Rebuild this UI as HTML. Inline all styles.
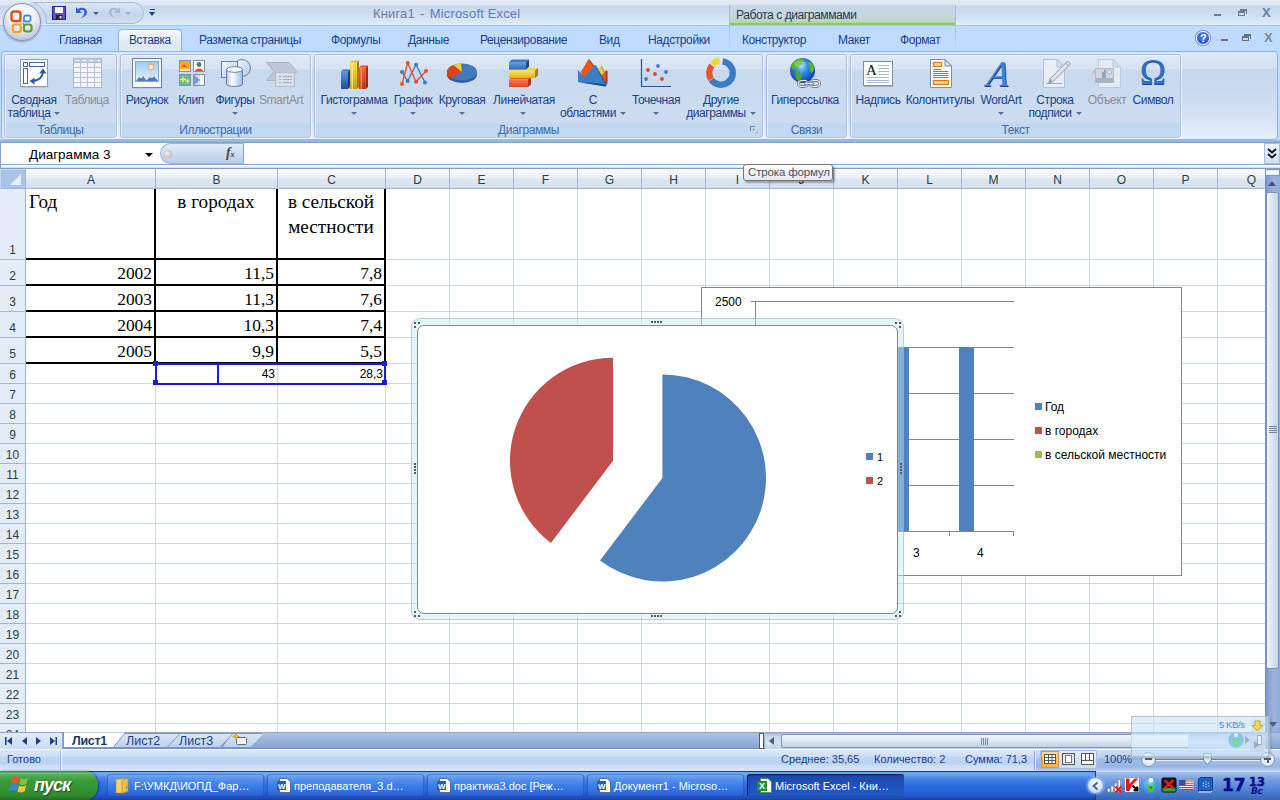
<!DOCTYPE html>
<html lang="ru"><head><meta charset="utf-8"><title>Книга1 - Microsoft Excel</title>
<style>
*{box-sizing:border-box;margin:0;padding:0}
html,body{width:1280px;height:800px;overflow:hidden;background:#fff}
body{font-family:"Liberation Sans",sans-serif;font-size:12px;letter-spacing:-.4px;color:#15428b;position:relative}
.abs,.abs>*{position:absolute}
.a{position:absolute}
.t{position:absolute;white-space:nowrap;line-height:14px}
.c{text-align:center}
#title{left:0;top:0;width:1280px;height:26px;background:linear-gradient(#e2ebf6 0,#dbe6f4 5px,#c8d9ee 6px,#cbdbf0 12px,#d6e4f5 19px,#e1ecf9 25px)}
#tabrow{left:0;top:26px;width:1280px;height:27px;background:#bfdbff}
#ribbon{left:1px;top:51px;width:1277px;height:89px;border:1px solid #8db2e3;border-radius:4px;background:linear-gradient(#dde8f5 0,#d4e1f2 16px,#c8d9ee 17px,#c9daef 40px,#d6e4f5 68px,#e6f1fc 88px)}
.grp{position:absolute;top:54px;height:84px;border:1px solid #a9c2e2;border-radius:3px;background:linear-gradient(#dfe9f5 0,#d6e2f2 14px,#c8d9ee 15px,#cddcf1 67px,#c1d8f0 68px,#c3daf3 100%);box-shadow:1px 1px 0 rgba(255,255,255,.65), inset 1px 1px 0 rgba(255,255,255,.5)}
.glab{position:absolute;left:0;right:0;bottom:0;height:15px;line-height:17px;text-align:center;color:#3e6aaa;font-size:12px}
.rl{position:absolute;white-space:nowrap;text-align:center;line-height:13px;font-size:12px;color:#15428b}
.dis{color:#8d8d8d}
.ia{display:inline-block;vertical-align:middle;margin-left:4px;margin-top:-1px;width:0;height:0;border-left:3px solid transparent;border-right:3px solid transparent;border-top:3px solid #5a6f96}
.arr{position:absolute;width:0;height:0;border-left:3px solid transparent;border-right:3px solid transparent;border-top:3px solid #5a6f96}
.tb{position:absolute;top:774px;height:23px;width:157px;border-radius:3px;background:linear-gradient(#86b8f3 0,#5e9cee 3px,#4585e8 9px,#3572e0 16px,#2c62d4 21px,#2350ba 23px);box-shadow:inset 0 0 0 1px rgba(30,70,180,.55)}
.tbt{position:absolute;top:779px;color:#fff;font-size:11px;letter-spacing:0;line-height:14px;white-space:nowrap}
.hd{position:absolute;width:2px;height:2px;background:#5a5a5a}
</style></head><body>
<!-- TITLE BAR -->
<div class="a" id="title"></div>
<div class="a" style="left:0;top:25px;width:1280px;height:1px;background:#a5c6ee"></div>
<div class="a" id="tabrow"></div>
<!-- contextual tab header -->
<div class="a" style="left:729px;top:5px;width:227px;height:20px;background:linear-gradient(#c6d6e8 0,#c5d8e0 10px,#bcd6bc 17px,#86c349 19px,#a4d17c 20px);border-left:1px solid #a9bfd9;border-right:1px solid #a9bfd9"></div>
<div class="a" style="left:729px;top:26px;width:1px;height:25px;background:linear-gradient(#a9bfd9,#bfdbff)"></div>
<div class="a" style="left:955px;top:26px;width:1px;height:25px;background:linear-gradient(#a9bfd9,#bfdbff)"></div>
<div class="t" style="left:736px;top:8px;font-size:12px;color:#1e395b">Работа с диаграммами</div>
<div class="t" style="left:373px;top:7px;font-size:13px;color:#6f7d9c;letter-spacing:.15px;word-spacing:1.500px">Книга1 - <span style="color:#6678b8;word-spacing:0">Microsoft Excel</span></div>
<!-- quick access toolbar -->
<div class="a" style="left:30px;top:2px;width:114px;height:22px;overflow:hidden;border-radius:0 11px 11px 0"><div class="a" style="left:0;top:0;width:114px;height:22px;border:1px solid #a3bcdc;border-radius:0 11px 11px 0;background:linear-gradient(#dbe6f4,#c4d6ec 60%,#d0dff1)"></div><div class="a" style="left:-31px;top:-3px;width:48px;height:48px;border-radius:50%;background:#cddcf0;border:1px solid #a3bcdc"></div></div>
<!-- office button -->
<div class="a" style="left:3px;top:3px;width:38px;height:38px;border-radius:50%;background:radial-gradient(circle at 50% 28%,#ffffff 0,#f1f3f7 38%,#cdd3de 72%,#a9b2c2 100%);border:1px solid #8d97a9;box-shadow:0 1px 2px rgba(60,80,120,.45)"></div>
<svg class="a" style="left:9px;top:9px" width="26" height="26" viewBox="0 0 26 26">
<rect x="2.500" y="2.500" width="9" height="9.500" rx="2.500" fill="none" stroke="#dd4f14" stroke-width="2.400"/>
<rect x="15" y="6.500" width="6.500" height="6" rx="1.800" fill="none" stroke="#3f8ad6" stroke-width="1.800"/>
<rect x="3.800" y="15.500" width="8" height="7.500" rx="2.200" fill="none" stroke="#f3a31a" stroke-width="2.200"/>
<rect x="15" y="15.500" width="7.500" height="7" rx="2.200" fill="none" stroke="#58a02a" stroke-width="2.200"/>
<circle cx="11.800" cy="12.200" r="1" fill="#e8681c"/><circle cx="14.600" cy="12.200" r="1" fill="#3f8ad6"/><circle cx="11.800" cy="15" r="1" fill="#f3a31a"/><circle cx="14.600" cy="15" r="1" fill="#58a02a"/>
</svg>
<!-- save icon -->
<svg class="a" style="left:52px;top:6px" width="14" height="14" viewBox="0 0 14 14"><rect x="0.5" y="0.5" width="13" height="13" fill="#5a4fc0" stroke="#2a2480"/><rect x="3" y="1" width="8" height="6" fill="#f4f4fb"/><rect x="4" y="9" width="6" height="4" fill="#222"/><rect x="7.5" y="10" width="2" height="2.5" fill="#ddd"/></svg>
<!-- undo -->
<svg class="a" style="left:74px;top:6px" width="16" height="14" viewBox="0 0 16 14"><path d="M2 1 L2 7 L8 7 L5.8 5 C8 2.6 11 4 10.4 7.2 C10 9.4 8.4 10.8 6.8 11.8 C10.6 11.4 13.2 9 13 5.8 C12.6 1.6 7.4 0.4 4 3.2 Z" fill="#2f62c4"/></svg>
<div class="arr" style="left:93px;top:12px;border-top-color:#3c5f9c"></div>
<!-- redo disabled -->
<svg class="a" style="left:106px;top:6px" width="16" height="14" viewBox="0 0 16 14"><path d="M14 1 L14 7 L8 7 L10.2 5 C8 2.6 5 4 5.6 7.2 C6 9.4 7.6 10.8 9.2 11.8 C5.4 11.4 2.8 9 3 5.8 C3.4 1.6 8.6 0.4 12 3.2 Z" fill="#a9b9d2"/></svg>
<div class="arr" style="left:125px;top:12px;border-top-color:#a6b0c2"></div>
<!-- qat customize -->
<div class="a" style="left:150px;top:9px;width:5px;height:1px;background:#1e3c7a"></div>
<div class="arr" style="left:149px;top:12px;border-top-color:#1e3c7a;border-left-width:3.5px;border-right-width:3.5px;border-top-width:4px"></div>
<!-- window controls -->
<div class="a" style="left:1214px;top:14px;width:7px;height:2px;background:#6b7a8f"></div>
<div class="a" style="left:1238px;top:11px;width:7px;height:5px;border:1px solid #6b7a8f;border-top-width:2px"></div>
<div class="a" style="left:1240px;top:9px;width:7px;height:5px;border:1px solid #6b7a8f;border-top-width:2px;border-left:none;border-bottom:none"></div>
<div class="t" style="left:1262px;top:6px;font-size:13px;font-weight:bold;color:#6b7fa0">X</div>
<div class="a" style="left:1221px;top:39px;width:7px;height:2px;background:#6b6f78"></div>
<div class="a" style="left:1242px;top:36px;width:7px;height:5px;border:1px solid #6b6f78;border-top-width:2px"></div>
<div class="a" style="left:1244px;top:34px;width:7px;height:5px;border:1px solid #6b6f78;border-top-width:2px;border-left:none;border-bottom:none"></div>
<div class="t" style="left:1264px;top:31px;font-size:13px;font-weight:bold;color:#84878d">X</div>
<div class="a" style="left:1196px;top:31px;width:14px;height:14px;border-radius:50%;background:radial-gradient(circle at 50% 35%,#5f8df0,#1235b8);border:1px solid #fff;box-shadow:0 0 0 1px #6d8fd0"></div>
<div class="t" style="left:1200px;top:31px;font-size:11px;font-weight:bold;color:#fff">?</div>
<div class="a" style="left:0;top:50px;width:1280px;height:91px;background:#bfdbff"></div>
<!-- TABS -->
<div class="a" style="left:118px;top:29px;width:64px;height:24px;border:1px solid #8db2e3;border-bottom:none;border-radius:4px 4px 0 0;background:linear-gradient(#f6f9fd,#e1eaf6 60%,#dde8f5)"></div>
<div class="t" style="left:59px;top:33px">Главная</div>
<div class="t" style="left:129px;top:33px">Вставка</div>
<div class="t" style="left:199px;top:33px">Разметка страницы</div>
<div class="t" style="left:331px;top:33px">Формулы</div>
<div class="t" style="left:408px;top:33px">Данные</div>
<div class="t" style="left:480px;top:33px">Рецензирование</div>
<div class="t" style="left:599px;top:33px">Вид</div>
<div class="t" style="left:648px;top:33px">Надстройки</div>
<div class="t" style="left:742px;top:33px">Конструктор</div>
<div class="t" style="left:838px;top:33px">Макет</div>
<div class="t" style="left:900px;top:33px">Формат</div>
<!-- RIBBON -->
<div class="a" id="ribbon"></div>
<div class="grp" style="left:4px;width:113px"><div class="glab">Таблицы</div></div>
<div class="grp" style="left:120px;width:191px"><div class="glab">Иллюстрации</div></div>
<div class="grp" style="left:314px;width:449px"><div class="glab" style="right:20px">Диаграммы</div></div>
<div class="grp" style="left:766px;width:81px"><div class="glab">Связи</div></div>
<div class="grp" style="left:850px;width:331px"><div class="glab">Текст</div></div>
<!-- dialog launcher -->
<svg class="a" style="left:750px;top:126px" width="8" height="8" viewBox="0 0 8 8"><path d="M0.5 5 V0.5 H5" fill="none" stroke="#6d83a8"/><path d="M3 3 L7 7 M7 4 V7 H4" fill="none" stroke="#6d83a8" stroke-width="1.2"/><rect x="4" y="4" width="3.5" height="3.5" fill="#fff" opacity=".6"/></svg>
<!-- ribbon labels -->
<div class="rl" style="left:-6px;top:94px;width:80px">Сводная<br>таблица<i class="ia"></i></div>
<div class="rl dis" style="left:47px;top:94px;width:80px">Таблица</div>
<div class="rl" style="left:107px;top:94px;width:80px">Рисунок</div>
<div class="rl" style="left:151px;top:94px;width:80px">Клип</div>
<div class="rl" style="left:195px;top:94px;width:80px">Фигуры</div><div class="arr" style="left:232px;top:112px"></div>
<div class="rl dis" style="left:241px;top:94px;width:80px">SmartArt</div>
<div class="rl" style="left:314px;top:94px;width:80px">Гистограмма</div><div class="arr" style="left:351px;top:112px"></div>
<div class="rl" style="left:373px;top:94px;width:80px">График</div><div class="arr" style="left:410px;top:112px"></div>
<div class="rl" style="left:422px;top:94px;width:80px">Круговая</div><div class="arr" style="left:459px;top:112px"></div>
<div class="rl" style="left:484px;top:94px;width:80px">Линейчатая</div><div class="arr" style="left:520px;top:112px"></div>
<div class="rl" style="left:553px;top:94px;width:80px">С<br>областями<i class="ia"></i></div>
<div class="rl" style="left:616px;top:94px;width:80px">Точечная</div><div class="arr" style="left:653px;top:112px"></div>
<div class="rl" style="left:681px;top:94px;width:80px">Другие<br>диаграммы<i class="ia"></i></div>
<div class="rl" style="left:765px;top:94px;width:80px">Гиперссылка</div>
<div class="rl" style="left:838px;top:94px;width:80px">Надпись</div>
<div class="rl" style="left:900px;top:94px;width:80px">Колонтитулы</div>
<div class="rl" style="left:961px;top:94px;width:80px">WordArt</div><div class="arr" style="left:998px;top:112px"></div>
<div class="rl" style="left:1015px;top:94px;width:80px">Строка<br>подписи<i class="ia"></i></div>
<div class="rl dis" style="left:1067px;top:94px;width:80px">Объект</div>
<div class="rl" style="left:1113px;top:94px;width:80px">Символ</div>
<!-- ICONS group 1,2 -->
<svg class="a" style="left:18px;top:57px" width="32" height="32" viewBox="0 0 32 32">
<rect x="2.5" y="2.5" width="27" height="27" fill="#fdfeff" stroke="#8fa0bf"/><rect x="3" y="29.5" width="27.5" height="1" fill="#8d9bb5" opacity=".6"/>
<rect x="5.5" y="5.5" width="4" height="4" fill="#fff" stroke="#4466a0"/><rect x="11.5" y="5.5" width="15" height="4" fill="#fff" stroke="#4466a0"/><rect x="5.5" y="11.5" width="4" height="15" fill="#fff" stroke="#4466a0"/>
<path d="M14.5 24 C21 23.5 24.5 20 25 15" fill="none" stroke="#2b57a5" stroke-width="2"/><path d="M25 11.5 L21.2 16.3 L28.4 16.6 Z" fill="#2b57a5"/><path d="M11.5 24 L16.6 20.8 L16.4 27.6 Z" fill="#2b57a5"/>
</svg>
<svg class="a" style="left:72px;top:57px" width="32" height="32" viewBox="0 0 32 32">
<rect x="1.5" y="1.5" width="28" height="29" fill="#f2f5fa" stroke="#aab6cb"/><rect x="1.5" y="1.5" width="28" height="4" fill="#c5cfdf" stroke="#aab6cb"/>
<path d="M8.5 1.5V30.5M15.5 1.5V30.5M22.5 1.5V30.5M1.5 10.5H29.5M1.5 15.5H29.5M1.5 20.5H29.5M1.5 25.5H29.5" stroke="#b7c2d6" fill="none"/>
<path d="M4 3 h3 l-1.5 1.8z M11 3 h3 l-1.5 1.8z M18 3 h3 l-1.5 1.8z M25 3 h3 l-1.5 1.8z" fill="#f4f6fa"/>
</svg>
<svg class="a" style="left:131px;top:57px" width="32" height="32" viewBox="0 0 32 32">
<defs><linearGradient id="sky" x1="0" y1="0" x2="0" y2="1"><stop offset="0" stop-color="#9ecbf5"/><stop offset="1" stop-color="#e4f2fd"/></linearGradient></defs>
<rect x="1.5" y="1.5" width="29" height="29" fill="#f3f7fc" stroke="#6f7f9d"/><rect x="2" y="30.5" width="29.5" height="1" fill="#8d9bb5" opacity=".5"/>
<rect x="4.500" y="4.500" width="23" height="20" fill="url(#sky)" stroke="#8aa4cf"/>
<path d="M5 24 L10.5 17 L16 24 Z" fill="#5d79b6"/><path d="M10.5 17 L8 20.2 L10.5 21.5 L12 19 Z" fill="#e8eef8"/>
<path d="M15 24 L21.5 17.5 L27 24 Z" fill="#4a73c4"/><path d="M21.500 17.500 L18.800 20.200 L21 21.200 L23 19.300 Z" fill="#dfe8f6"/>
<circle cx="20" cy="10" r="3" fill="#fde9c6" stroke="#f29b5e" stroke-width="1"/>
</svg>
<svg class="a" style="left:178px;top:59px" width="28" height="28" viewBox="0 0 28 28">
<rect x="1.5" y="1.5" width="11" height="11" fill="#f7a81b" stroke="#8090b0"/><rect x="2" y="10" width="10" height="2" fill="#fbe3c0"/><path d="M4 8 L6 5 L8 7 L10 8Z" fill="#e2551a"/>
<rect x="15.5" y="1.5" width="11" height="11" fill="#fff" stroke="#8090b0"/><circle cx="21" cy="5.500" r="2.400" fill="#6d6d6d"/><path d="M17 12 C17 8.5 25 8.500 25 12Z" fill="#d9541a"/>
<rect x="1.5" y="15.5" width="11" height="11" fill="#6dbb8c" stroke="#8090b0"/><path d="M5 17 l1 2.500 2.500 1 -2.500 1 -1 2.500 -1 -2.500 -2.500 -1 2.500 -1z M9.500 19.500 l.8 1.800 1.700 .7 -1.700 .7 -.8 1.800 -.8 -1.800 -1.700 -.7 1.700 -.7z" fill="#f5ee7a"/>
<rect x="15.5" y="15.5" width="11" height="11" fill="#cfdcf4" stroke="#8090b0"/><path d="M16 16 L22 21 L16 26Z" fill="#6f9ae6"/><path d="M22 16 h4 v10 h-4 l-0 -5z" fill="#f6f9fe"/>
</svg>
<svg class="a" style="left:219px;top:57px" width="34" height="32" viewBox="0 0 34 32">
<defs><linearGradient id="cyl" x1="0" y1="0" x2="1" y2="0"><stop offset="0" stop-color="#a9c8ee"/><stop offset=".35" stop-color="#ffffff"/><stop offset="1" stop-color="#9dbde8"/></linearGradient>
<linearGradient id="shp" x1="0" y1="0" x2="1" y2="1"><stop offset="0" stop-color="#f4f8fe"/><stop offset="1" stop-color="#aecbf0"/></linearGradient></defs>
<circle cx="23" cy="11" r="8.5" fill="url(#shp)" stroke="#6e7f99"/>
<rect x="2.5" y="4.500" width="16" height="16" fill="url(#shp)" stroke="#6e7f99"/>
<path d="M7.500 12.500 V27 C7.500 30.300 23.500 30.300 23.500 27 V12.500 Z" fill="url(#cyl)" stroke="#6e7f99"/><ellipse cx="15.500" cy="12.500" rx="8" ry="2.800" fill="#f7faff" stroke="#6e7f99"/>
</svg>
<svg class="a" style="left:265px;top:60px" width="34" height="28" viewBox="0 0 34 28">
<path d="M1.5 2.500 H24 L32 11.500 L24 20.500 H1.500 L9 11.500 Z" fill="#bcc7d9" stroke="#aab5c9"/>
<rect x="10.500" y="12.500" width="19" height="14" fill="#d8dfeb" stroke="#b4bed0"/>
<path d="M14 16.500 h2 M18 16.500 h9 M14 19.500 h2 M18 19.500 h9 M14 22.500 h2 M18 22.500 h9" stroke="#a2adc2" fill="none"/>
</svg>
<!-- ICONS charts -->
<svg class="a" style="left:338px;top:57px" width="34" height="34" viewBox="0 0 34 34">
<defs>
<linearGradient id="gb" x1="0" y1="0" x2="0" y2="1"><stop offset="0" stop-color="#5b97dc"/><stop offset="1" stop-color="#1e4f96"/></linearGradient>
<linearGradient id="gy" x1="0" y1="0" x2="0" y2="1"><stop offset="0" stop-color="#fbe14a"/><stop offset="1" stop-color="#c99a12"/></linearGradient>
<linearGradient id="gr" x1="0" y1="0" x2="0" y2="1"><stop offset="0" stop-color="#f2673a"/><stop offset="1" stop-color="#c2361a"/></linearGradient>
</defs>
<path d="M3 14.500 h7 v17.500 h-7z" fill="url(#gb)"/><path d="M3 14.500 l2 -2 h7 l-2 2z" fill="#3f78c3"/><path d="M10 14.500 l2 -2 v17.500 l-2 2z" fill="#183f7d"/>
<path d="M12 5.500 h7 v26.500 h-7z" fill="url(#gy)"/><path d="M12 5.500 l2 -2 h7 l-2 2z" fill="#e5c22a"/><path d="M19 5.500 l2 -2 v26.500 l-2 2z" fill="#a77b0c"/><rect x="13.500" y="6" width="1.500" height="26" fill="#fff7a8" opacity=".7"/>
<path d="M21 10.500 h7 v21.500 h-7z" fill="url(#gr)"/><path d="M21 10.500 l2 -2 h7 l-2 2z" fill="#e3522a"/><path d="M28 10.500 l2 -2 v21.500 l-2 2z" fill="#a52a12"/><rect x="22.500" y="11" width="1.500" height="21" fill="#ffb096" opacity=".6"/>
</svg>
<svg class="a" style="left:398px;top:58px" width="32" height="30" viewBox="0 0 32 30">
<path d="M4 14 L9.700 23 L18 6.700 L27 24.600" fill="none" stroke="#3c6fb4" stroke-width="1.200"/>
<path d="M4 26 L9.700 5 L18 23.700 L28 13" fill="none" stroke="#e2502a" stroke-width="1.400"/>
<circle cx="4" cy="14" r="2" fill="#3f7bc8"/><circle cx="9.700" cy="23" r="2" fill="#3f7bc8"/><circle cx="18" cy="6.700" r="2" fill="#3f7bc8"/><circle cx="27" cy="24.600" r="2" fill="#3f7bc8"/>
<circle cx="4" cy="26" r="2" fill="#e8512a"/><circle cx="9.700" cy="5" r="2" fill="#e8512a"/><circle cx="18" cy="23.700" r="2" fill="#e8512a"/><circle cx="28" cy="13" r="2" fill="#e8512a"/>
</svg>
<svg class="a" style="left:445px;top:61px" width="34" height="24" viewBox="0 0 34 24">
<ellipse cx="17" cy="13.500" rx="15" ry="8.500" fill="#2c5e9e"/><path d="M2 11 v2.500 a15 8.500 0 0 0 4 5.800 v-2.500z" fill="#b8351a"/>
<ellipse cx="17" cy="11" rx="15" ry="8.500" fill="#4279b8"/>
<path d="M17 11 L6 16.800 A15 8.500 0 0 1 8.500 4 Z" fill="#dc4418"/><path d="M17 11 L8.500 4 A15 8.500 0 0 1 16 2.500 Z" fill="#f8d22c"/>
</svg>
<svg class="a" style="left:506px;top:57px" width="34" height="32" viewBox="0 0 34 32">
<defs><linearGradient id="hb" x1="0" y1="0" x2="0" y2="1"><stop offset="0" stop-color="#6aa4e4"/><stop offset="1" stop-color="#2f65ac"/></linearGradient>
<linearGradient id="hy" x1="0" y1="0" x2="0" y2="1"><stop offset="0" stop-color="#fde656"/><stop offset="1" stop-color="#e0b21c"/></linearGradient>
<linearGradient id="hr" x1="0" y1="0" x2="0" y2="1"><stop offset="0" stop-color="#f57a4e"/><stop offset="1" stop-color="#dd4420"/></linearGradient></defs>
<path d="M3 22.500 h19 l3 -2.500 h-19z" fill="#e65a32"/><rect x="3" y="22.500" width="19" height="7.500" fill="url(#hr)"/><path d="M22 22.500 l3 -2.500 v7.500 l-3 2.500z" fill="#b83214"/>
<path d="M3 13.500 h26 l3 -2.500 h-26z" fill="#f3d43a"/><rect x="3" y="13.500" width="26" height="7.500" fill="url(#hy)"/><path d="M29 13.500 l3 -2.500 v7.500 l-3 2.500z" fill="#a88010"/>
<path d="M3 5 h17 l3 -2.500 h-17z" fill="#3f7ac4"/><rect x="3" y="5" width="17" height="7.500" fill="url(#hb)"/><path d="M20 5 l3 -2.500 v7.500 l-3 2.500z" fill="#1c4a8c"/>
</svg>
<svg class="a" style="left:576px;top:57px" width="34" height="32" viewBox="0 0 34 32">
<path d="M5 15 L12.500 2 L19 10 L19 21 L8 21 Z" fill="#e8561c"/><path d="M12.500 2 L14 3 L19 10 L18 11Z" fill="#b63a10"/>
<path d="M21 14 L24.500 9 L28 16 L26 22Z" fill="#f6d52e"/><path d="M24.500 9 L26 9.500 L29 15 L28 16Z" fill="#c49a14"/>
<path d="M24 20 L30 13.500 L30 26 Z" fill="#e8561c"/><path d="M30 13.500 L31.500 14 V27 L30 26Z" fill="#a93410"/>
<path d="M2 13 L8.500 20 L18.500 8 L29.500 27 L29.500 29.500 L2 25 Z" fill="#3f7cc6"/><path d="M2 25 L29.500 29.500 L31 28 L29.500 27 Z" fill="#1f4d8e"/><path d="M18.500 8 L20 8.500 L31 27.500 L29.500 28 Z" fill="#2a5ea4"/>
</svg>
<svg class="a" style="left:639px;top:57px" width="34" height="32" viewBox="0 0 34 32">
<path d="M2.500 2 V29.500 H32" fill="none" stroke="#2a5594" stroke-width="1.200"/>
<circle cx="9" cy="13" r="1.900" fill="#e0461e"/><circle cx="16" cy="17" r="1.900" fill="#e0461e"/><circle cx="23" cy="22" r="1.900" fill="#e0461e"/>
<circle cx="19" cy="9" r="1.900" fill="#3f7bc8"/><circle cx="27" cy="15" r="1.900" fill="#3f7bc8"/><circle cx="7" cy="22" r="1.900" fill="#3f7bc8"/>
</svg>
<svg class="a" style="left:704px;top:56px" width="34" height="34" viewBox="0 0 34 34">
<circle cx="17" cy="17" r="11.800" fill="none" stroke="#3d7cc4" stroke-width="6.400" stroke-dasharray="46.500 27.640" transform="rotate(-82 17 17)" />
<circle cx="17" cy="17" r="11.800" fill="none" stroke="#e8552c" stroke-width="6.400" stroke-dasharray="14.500 59.640" transform="rotate(148 17 17)"/>
<circle cx="17" cy="17" r="12.400" fill="none" stroke="#f6d42c" stroke-width="6" stroke-dasharray="8 69.900" transform="rotate(226 17 17)"/>
</svg>
<!-- ICONS links/text -->
<svg class="a" style="left:788px;top:56px" width="34" height="34" viewBox="0 0 34 34">
<defs><radialGradient id="glb" cx=".45" cy=".35" r=".7"><stop offset="0" stop-color="#8fd0ff"/><stop offset=".45" stop-color="#2a7ee0"/><stop offset="1" stop-color="#0b2f9a"/></radialGradient></defs>
<circle cx="14.500" cy="14.500" r="12.500" fill="url(#glb)"/>
<path d="M4 8 C6 4 10 2.500 14 2.500 C15 4 17 4 16 6 C14 7 13 9 11 9.500 C9.500 11 11 13 9 13.500 C7 14 6 12 3.500 12.500 C3 11 3.500 9 4 8Z" fill="#55b52e"/>
<path d="M8 16 C10 15 13 16.500 14 19 C14 22 12 23 11.500 26 C9 25 6 21 8 16Z" fill="#4aa828"/>
<path d="M21 6 C23 6 25 8 26 11 C26.500 14 25 16 23 17 C21.500 15 22.500 12 21 10 C20 8.500 20 7 21 6Z" fill="#58b830"/>
<ellipse cx="12" cy="8" rx="6" ry="3.500" fill="#fff" opacity=".25"/>
<rect x="10.500" y="24.500" width="9" height="6" rx="3" fill="none" stroke="#5b6270" stroke-width="2.600"/><rect x="22.500" y="24.500" width="9" height="6" rx="3" fill="none" stroke="#5b6270" stroke-width="2.600"/>
<rect x="10.500" y="24.500" width="9" height="6" rx="3" fill="none" stroke="#e9edf3" stroke-width="1.200"/><rect x="22.500" y="24.500" width="9" height="6" rx="3" fill="none" stroke="#e9edf3" stroke-width="1.200"/>
<rect x="16.500" y="26.200" width="9" height="2.600" rx="1.300" fill="#eef1f6" stroke="#5b6270" stroke-width=".9"/>
</svg>
<svg class="a" style="left:861px;top:59px" width="34" height="30" viewBox="0 0 34 30">
<rect x="2.500" y="2.500" width="29" height="24" fill="#fdfeff" stroke="#7f8ea8"/><rect x="3" y="27" width="29.500" height="1" fill="#8d9bb5" opacity=".6"/>
<path d="M17.500 6.500 H28 M17.500 9.500 H28 M17.500 12.500 H28 M17.500 15.500 H28 M5.500 18.500 H28 M5.500 21.500 H28 M5.500 23.500 H28" stroke="#a9b9d4" fill="none"/>
<text x="5" y="16" font-family="Liberation Serif,serif" font-size="15" fill="#111">A</text>
</svg>
<svg class="a" style="left:928px;top:57px" width="26" height="32" viewBox="0 0 26 32">
<path d="M2.500 2.500 H17 L23.500 9 V30.500 H2.500 Z" fill="#fdfeff" stroke="#7f8ea8"/><path d="M17 2.500 V9 H23.500 Z" fill="#d7e2f2" stroke="#7f8ea8"/>
<rect x="5.500" y="5.500" width="8" height="4" fill="#fbd59a" stroke="#e07a10" stroke-width="1.200"/><rect x="5.500" y="23.500" width="15" height="4" fill="#fbd59a" stroke="#e07a10" stroke-width="1.200"/>
<path d="M5 12.500 H13 M5 14.500 H20.500 M5 16.500 H20.500 M5 18.500 H20.500 M5 20.500 H20.500" stroke="#5f7fc0" fill="none"/>
</svg>
<svg class="a" style="left:984px;top:55px" width="30" height="36" viewBox="0 0 30 36">
<text x="3" y="32" font-family="Liberation Serif,serif" font-style="italic" font-size="36" fill="#1c3f80" transform="skewX(-8) translate(4 0)">A</text>
<text x="2" y="31" font-family="Liberation Serif,serif" font-style="italic" font-size="36" fill="#3f7fd8" transform="skewX(-8) translate(4 0)">A</text>
</svg>
<svg class="a" style="left:1041px;top:57px" width="34" height="32" viewBox="0 0 34 32">
<path d="M2.500 2.500 H16 L23.500 10 V30.500 H2.500 Z" fill="#e9eef6" stroke="#b4c0d4"/><path d="M16 2.500 V10 H23.500 Z" fill="#d5deec" stroke="#b4c0d4"/>
<path d="M5 26.500 H21" stroke="#9aa7bd" fill="none"/>
<path d="M26.500 4 L29.500 7 L12 24.500 L7.500 26.500 L9 22 Z" fill="#dfe5ee" stroke="#8f9bb0"/><path d="M24.500 6 L27.500 9" stroke="#8f9bb0"/><path d="M7.500 26.500 L9 22 L12 24.500Z" fill="#9aa5b8"/>
</svg>
<svg class="a" style="left:1091px;top:57px" width="32" height="32" viewBox="0 0 32 32">
<path d="M7.500 2.500 H22 L29.500 10 V30.500 H7.500 Z" fill="#e6ebf3" stroke="#c0c9d9"/><path d="M22 2.500 V10 H29.500 Z" fill="#d5dce8" stroke="#c0c9d9"/>
<rect x="4.500" y="11.500" width="18" height="14" fill="#cfd6e2" stroke="#b3bccd"/><rect x="4.500" y="21" width="18" height="4.500" fill="#a9b3c5"/>
<path d="M11 21 V15 h2 v-2.500 h2 V21z" fill="#9aa5b8"/><circle cx="18.500" cy="15" r="2" fill="#e8ecf2" stroke="#a9b3c5"/><path d="M2 12.500 L4.500 15 L2 17.500Z" fill="#b3bccd"/>
</svg>
<div class="t" style="left:1140px;top:49px;letter-spacing:0;font-family:'Liberation Serif',serif;font-size:35px;line-height:48px;color:#2f6fc6;text-shadow:0 1px 0 #1b4a96">Ω</div>
<!-- FORMULA BAR -->
<div class="a" style="left:0;top:140px;width:1280px;height:29px;background:linear-gradient(#a9c3e8 0,#8dacd8 2px,#7898c8 3px,#fff 3px,#fff 24px,#86a5d0 24px,#86a5d0 25px,#fff 25px,#eef4fb 27px,#bdd1ec 28px,#7f9fce 28px,#7f9fce 29px)"></div><div class="a" style="left:0;top:140px;width:1px;height:29px;background:#86a5d0"></div>
<div class="a" style="left:160px;top:143px;width:84px;height:21px;border:1px solid #9db5d6;border-radius:11px 0 0 11px;border-right-color:#8aa6cc;background:linear-gradient(#e3ecf8,#c3d5ee 70%,#b7cdea)"></div>
<div class="a" style="left:155px;top:143px;width:14px;height:22px;background:#fff;border-radius:0 0 12px 0/0 0 22px 0;display:none"></div>
<div class="a" style="left:164px;top:150px;width:8px;height:8px;border-radius:50%;background:radial-gradient(circle at 40% 40%,#f2f2f2,#a9a9a9)"></div>
<div class="t" style="left:226px;top:145px;font-family:'Liberation Serif',serif;font-style:italic;font-weight:bold;font-size:14px;color:#4a4a4a;line-height:16px">f<span style="font-size:9px">x</span></div>
<div class="t" style="left:29px;top:148px;color:#000;font-size:13.500px;letter-spacing:0">Диаграмма 3</div>
<div class="arr" style="left:145px;top:153px;border-top-color:#000;border-left-width:4px;border-right-width:4px;border-top-width:4px"></div>
<!-- formula bar expand button -->
<div class="a" style="left:1264px;top:143px;width:16px;height:21px;border:1px solid #a5bfe0;background:linear-gradient(#eef4fb,#cfdff3)"></div>
<svg class="a" style="left:1267px;top:148px" width="10" height="11" viewBox="0 0 10 11"><path d="M1 1 L5 4.500 L9 1 M1 6 L5 9.500 L9 6" fill="none" stroke="#111" stroke-width="1.800"/></svg>
<!-- GRID -->
<div class="a" id="sheet" style="left:0;top:169px;width:1265px;height:563px;overflow:hidden;background:#fff">
<div class="a" style="left:155px;top:19px;width:1px;height:560px;background:#d0d7e5"></div>
<div class="a" style="left:277px;top:19px;width:1px;height:560px;background:#d0d7e5"></div>
<div class="a" style="left:385px;top:19px;width:1px;height:560px;background:#d0d7e5"></div>
<div class="a" style="left:449px;top:19px;width:1px;height:560px;background:#d0d7e5"></div>
<div class="a" style="left:513px;top:19px;width:1px;height:560px;background:#d0d7e5"></div>
<div class="a" style="left:577px;top:19px;width:1px;height:560px;background:#d0d7e5"></div>
<div class="a" style="left:641px;top:19px;width:1px;height:560px;background:#d0d7e5"></div>
<div class="a" style="left:705px;top:19px;width:1px;height:560px;background:#d0d7e5"></div>
<div class="a" style="left:769px;top:19px;width:1px;height:560px;background:#d0d7e5"></div>
<div class="a" style="left:833px;top:19px;width:1px;height:560px;background:#d0d7e5"></div>
<div class="a" style="left:897px;top:19px;width:1px;height:560px;background:#d0d7e5"></div>
<div class="a" style="left:961px;top:19px;width:1px;height:560px;background:#d0d7e5"></div>
<div class="a" style="left:1025px;top:19px;width:1px;height:560px;background:#d0d7e5"></div>
<div class="a" style="left:1089px;top:19px;width:1px;height:560px;background:#d0d7e5"></div>
<div class="a" style="left:1153px;top:19px;width:1px;height:560px;background:#d0d7e5"></div>
<div class="a" style="left:1217px;top:19px;width:1px;height:560px;background:#d0d7e5"></div>
<div class="a" style="left:1285px;top:19px;width:1px;height:560px;background:#d0d7e5"></div>
<div class="a" style="left:26px;top:90px;width:1260px;height:1px;background:#d0d7e5"></div>
<div class="a" style="left:26px;top:116px;width:1260px;height:1px;background:#d0d7e5"></div>
<div class="a" style="left:26px;top:142px;width:1260px;height:1px;background:#d0d7e5"></div>
<div class="a" style="left:26px;top:168px;width:1260px;height:1px;background:#d0d7e5"></div>
<div class="a" style="left:26px;top:194px;width:1260px;height:1px;background:#d0d7e5"></div>
<div class="a" style="left:26px;top:214px;width:1260px;height:1px;background:#d0d7e5"></div>
<div class="a" style="left:26px;top:234px;width:1260px;height:1px;background:#d0d7e5"></div>
<div class="a" style="left:26px;top:254px;width:1260px;height:1px;background:#d0d7e5"></div>
<div class="a" style="left:26px;top:274px;width:1260px;height:1px;background:#d0d7e5"></div>
<div class="a" style="left:26px;top:294px;width:1260px;height:1px;background:#d0d7e5"></div>
<div class="a" style="left:26px;top:314px;width:1260px;height:1px;background:#d0d7e5"></div>
<div class="a" style="left:26px;top:334px;width:1260px;height:1px;background:#d0d7e5"></div>
<div class="a" style="left:26px;top:354px;width:1260px;height:1px;background:#d0d7e5"></div>
<div class="a" style="left:26px;top:374px;width:1260px;height:1px;background:#d0d7e5"></div>
<div class="a" style="left:26px;top:394px;width:1260px;height:1px;background:#d0d7e5"></div>
<div class="a" style="left:26px;top:414px;width:1260px;height:1px;background:#d0d7e5"></div>
<div class="a" style="left:26px;top:434px;width:1260px;height:1px;background:#d0d7e5"></div>
<div class="a" style="left:26px;top:454px;width:1260px;height:1px;background:#d0d7e5"></div>
<div class="a" style="left:26px;top:474px;width:1260px;height:1px;background:#d0d7e5"></div>
<div class="a" style="left:26px;top:494px;width:1260px;height:1px;background:#d0d7e5"></div>
<div class="a" style="left:26px;top:514px;width:1260px;height:1px;background:#d0d7e5"></div>
<div class="a" style="left:26px;top:534px;width:1260px;height:1px;background:#d0d7e5"></div>
<div class="a" style="left:26px;top:554px;width:1260px;height:1px;background:#d0d7e5"></div>
<div class="a" style="left:26px;top:574px;width:1260px;height:1px;background:#d0d7e5"></div>
<div class="a" style="left:0;top:0;width:1265px;height:20px;background:linear-gradient(#f9fbfd 0,#eaf0f8 9px,#dfe7f3 10px,#d5dfee 19px);border-bottom:1px solid #9eb6ce"></div>
<div class="a" style="left:155px;top:0;width:1px;height:20px;background:#9eb6ce"></div>
<div class="t c" style="left:27px;top:4px;width:128px;color:#27413e;font-size:12px;letter-spacing:0">A</div>
<div class="a" style="left:277px;top:0;width:1px;height:20px;background:#9eb6ce"></div>
<div class="t c" style="left:156px;top:4px;width:121px;color:#27413e;font-size:12px;letter-spacing:0">B</div>
<div class="a" style="left:385px;top:0;width:1px;height:20px;background:#9eb6ce"></div>
<div class="t c" style="left:278px;top:4px;width:107px;color:#27413e;font-size:12px;letter-spacing:0">C</div>
<div class="a" style="left:449px;top:0;width:1px;height:20px;background:#9eb6ce"></div>
<div class="t c" style="left:386px;top:4px;width:63px;color:#27413e;font-size:12px;letter-spacing:0">D</div>
<div class="a" style="left:513px;top:0;width:1px;height:20px;background:#9eb6ce"></div>
<div class="t c" style="left:450px;top:4px;width:63px;color:#27413e;font-size:12px;letter-spacing:0">E</div>
<div class="a" style="left:577px;top:0;width:1px;height:20px;background:#9eb6ce"></div>
<div class="t c" style="left:514px;top:4px;width:63px;color:#27413e;font-size:12px;letter-spacing:0">F</div>
<div class="a" style="left:641px;top:0;width:1px;height:20px;background:#9eb6ce"></div>
<div class="t c" style="left:578px;top:4px;width:63px;color:#27413e;font-size:12px;letter-spacing:0">G</div>
<div class="a" style="left:705px;top:0;width:1px;height:20px;background:#9eb6ce"></div>
<div class="t c" style="left:642px;top:4px;width:63px;color:#27413e;font-size:12px;letter-spacing:0">H</div>
<div class="a" style="left:769px;top:0;width:1px;height:20px;background:#9eb6ce"></div>
<div class="t c" style="left:706px;top:4px;width:63px;color:#27413e;font-size:12px;letter-spacing:0">I</div>
<div class="a" style="left:833px;top:0;width:1px;height:20px;background:#9eb6ce"></div>
<div class="t c" style="left:770px;top:4px;width:63px;color:#27413e;font-size:12px;letter-spacing:0">J</div>
<div class="a" style="left:897px;top:0;width:1px;height:20px;background:#9eb6ce"></div>
<div class="t c" style="left:834px;top:4px;width:63px;color:#27413e;font-size:12px;letter-spacing:0">K</div>
<div class="a" style="left:961px;top:0;width:1px;height:20px;background:#9eb6ce"></div>
<div class="t c" style="left:898px;top:4px;width:63px;color:#27413e;font-size:12px;letter-spacing:0">L</div>
<div class="a" style="left:1025px;top:0;width:1px;height:20px;background:#9eb6ce"></div>
<div class="t c" style="left:962px;top:4px;width:63px;color:#27413e;font-size:12px;letter-spacing:0">M</div>
<div class="a" style="left:1089px;top:0;width:1px;height:20px;background:#9eb6ce"></div>
<div class="t c" style="left:1026px;top:4px;width:63px;color:#27413e;font-size:12px;letter-spacing:0">N</div>
<div class="a" style="left:1153px;top:0;width:1px;height:20px;background:#9eb6ce"></div>
<div class="t c" style="left:1090px;top:4px;width:63px;color:#27413e;font-size:12px;letter-spacing:0">O</div>
<div class="a" style="left:1217px;top:0;width:1px;height:20px;background:#9eb6ce"></div>
<div class="t c" style="left:1154px;top:4px;width:63px;color:#27413e;font-size:12px;letter-spacing:0">P</div>
<div class="a" style="left:1285px;top:0;width:1px;height:20px;background:#9eb6ce"></div>
<div class="t c" style="left:1218px;top:4px;width:67px;color:#27413e;font-size:12px;letter-spacing:0">Q</div>
<div class="a" style="left:0;top:20px;width:26px;height:560px;background:#e4ecf7;border-right:1px solid #9eb6ce"></div>
<div class="a" style="left:0;top:90px;width:26px;height:1px;background:#9eb6ce"></div>
<div class="t c" style="left:0;top:74px;width:25px;color:#27413e;font-size:12px;letter-spacing:0">1</div>
<div class="a" style="left:0;top:116px;width:26px;height:1px;background:#9eb6ce"></div>
<div class="t c" style="left:0;top:100px;width:25px;color:#27413e;font-size:12px;letter-spacing:0">2</div>
<div class="a" style="left:0;top:142px;width:26px;height:1px;background:#9eb6ce"></div>
<div class="t c" style="left:0;top:126px;width:25px;color:#27413e;font-size:12px;letter-spacing:0">3</div>
<div class="a" style="left:0;top:168px;width:26px;height:1px;background:#9eb6ce"></div>
<div class="t c" style="left:0;top:152px;width:25px;color:#27413e;font-size:12px;letter-spacing:0">4</div>
<div class="a" style="left:0;top:194px;width:26px;height:1px;background:#9eb6ce"></div>
<div class="t c" style="left:0;top:178px;width:25px;color:#27413e;font-size:12px;letter-spacing:0">5</div>
<div class="a" style="left:0;top:214px;width:26px;height:1px;background:#9eb6ce"></div>
<div class="t c" style="left:0;top:199px;width:25px;color:#27413e;font-size:12px;letter-spacing:0">6</div>
<div class="a" style="left:0;top:234px;width:26px;height:1px;background:#9eb6ce"></div>
<div class="t c" style="left:0;top:219px;width:25px;color:#27413e;font-size:12px;letter-spacing:0">7</div>
<div class="a" style="left:0;top:254px;width:26px;height:1px;background:#9eb6ce"></div>
<div class="t c" style="left:0;top:239px;width:25px;color:#27413e;font-size:12px;letter-spacing:0">8</div>
<div class="a" style="left:0;top:274px;width:26px;height:1px;background:#9eb6ce"></div>
<div class="t c" style="left:0;top:259px;width:25px;color:#27413e;font-size:12px;letter-spacing:0">9</div>
<div class="a" style="left:0;top:294px;width:26px;height:1px;background:#9eb6ce"></div>
<div class="t c" style="left:0;top:279px;width:25px;color:#27413e;font-size:12px;letter-spacing:0">10</div>
<div class="a" style="left:0;top:314px;width:26px;height:1px;background:#9eb6ce"></div>
<div class="t c" style="left:0;top:299px;width:25px;color:#27413e;font-size:12px;letter-spacing:0">11</div>
<div class="a" style="left:0;top:334px;width:26px;height:1px;background:#9eb6ce"></div>
<div class="t c" style="left:0;top:319px;width:25px;color:#27413e;font-size:12px;letter-spacing:0">12</div>
<div class="a" style="left:0;top:354px;width:26px;height:1px;background:#9eb6ce"></div>
<div class="t c" style="left:0;top:339px;width:25px;color:#27413e;font-size:12px;letter-spacing:0">13</div>
<div class="a" style="left:0;top:374px;width:26px;height:1px;background:#9eb6ce"></div>
<div class="t c" style="left:0;top:359px;width:25px;color:#27413e;font-size:12px;letter-spacing:0">14</div>
<div class="a" style="left:0;top:394px;width:26px;height:1px;background:#9eb6ce"></div>
<div class="t c" style="left:0;top:379px;width:25px;color:#27413e;font-size:12px;letter-spacing:0">15</div>
<div class="a" style="left:0;top:414px;width:26px;height:1px;background:#9eb6ce"></div>
<div class="t c" style="left:0;top:399px;width:25px;color:#27413e;font-size:12px;letter-spacing:0">16</div>
<div class="a" style="left:0;top:434px;width:26px;height:1px;background:#9eb6ce"></div>
<div class="t c" style="left:0;top:419px;width:25px;color:#27413e;font-size:12px;letter-spacing:0">17</div>
<div class="a" style="left:0;top:454px;width:26px;height:1px;background:#9eb6ce"></div>
<div class="t c" style="left:0;top:439px;width:25px;color:#27413e;font-size:12px;letter-spacing:0">18</div>
<div class="a" style="left:0;top:474px;width:26px;height:1px;background:#9eb6ce"></div>
<div class="t c" style="left:0;top:459px;width:25px;color:#27413e;font-size:12px;letter-spacing:0">19</div>
<div class="a" style="left:0;top:494px;width:26px;height:1px;background:#9eb6ce"></div>
<div class="t c" style="left:0;top:479px;width:25px;color:#27413e;font-size:12px;letter-spacing:0">20</div>
<div class="a" style="left:0;top:514px;width:26px;height:1px;background:#9eb6ce"></div>
<div class="t c" style="left:0;top:499px;width:25px;color:#27413e;font-size:12px;letter-spacing:0">21</div>
<div class="a" style="left:0;top:534px;width:26px;height:1px;background:#9eb6ce"></div>
<div class="t c" style="left:0;top:519px;width:25px;color:#27413e;font-size:12px;letter-spacing:0">22</div>
<div class="a" style="left:0;top:554px;width:26px;height:1px;background:#9eb6ce"></div>
<div class="t c" style="left:0;top:539px;width:25px;color:#27413e;font-size:12px;letter-spacing:0">23</div>
<div class="a" style="left:0;top:574px;width:26px;height:1px;background:#9eb6ce"></div>
<div class="t c" style="left:0;top:559px;width:25px;color:#27413e;font-size:12px;letter-spacing:0">24</div>
<div class="a" style="left:0;top:0;width:26px;height:20px;background:#a9c4e9;border:1px solid #c5d9f5;border-right:1px solid #9eb6ce;border-bottom:1px solid #9eb6ce"></div>
<div class="a" style="left:10px;top:5px;width:0;height:0;border-left:11px solid transparent;border-bottom:11px solid #e9eef4"></div>
</div>
<!-- CELLS -->
<div class="a" style="left:26px;top:258px;width:360px;height:2px;background:#000"></div>
<div class="a" style="left:26px;top:284px;width:360px;height:2px;background:#000"></div>
<div class="a" style="left:26px;top:310px;width:360px;height:2px;background:#000"></div>
<div class="a" style="left:26px;top:336px;width:360px;height:2px;background:#000"></div>
<div class="a" style="left:26px;top:362px;width:360px;height:2px;background:#000"></div>
<div class="a" style="left:154px;top:189px;width:2px;height:175px;background:#000"></div>
<div class="a" style="left:276px;top:189px;width:2px;height:175px;background:#000"></div>
<div class="a" style="left:384px;top:189px;width:2px;height:175px;background:#000"></div>
<div id="cells" style="font-family:'Liberation Serif',serif;font-size:19.200px;letter-spacing:0;color:#000">
<div class="t" style="left:29px;top:189px;line-height:25px">Год</div>
<div class="t c" style="left:156px;top:189px;width:120px;line-height:25px">в городах</div>
<div class="t c" style="left:278px;top:189px;width:106px;line-height:25px">в сельской<br>местности</div>
<div class="t" style="right:1128px;top:261px;line-height:25px;font-size:17.400px">2002</div><div class="t" style="right:1006px;top:261px;line-height:25px;font-size:17.400px">11,5</div><div class="t" style="right:898px;top:261px;line-height:25px;font-size:17.400px">7,8</div>
<div class="t" style="right:1128px;top:287px;line-height:25px;font-size:17.400px">2003</div><div class="t" style="right:1006px;top:287px;line-height:25px;font-size:17.400px">11,3</div><div class="t" style="right:898px;top:287px;line-height:25px;font-size:17.400px">7,6</div>
<div class="t" style="right:1128px;top:313px;line-height:25px;font-size:17.400px">2004</div><div class="t" style="right:1006px;top:313px;line-height:25px;font-size:17.400px">10,3</div><div class="t" style="right:898px;top:313px;line-height:25px;font-size:17.400px">7,4</div>
<div class="t" style="right:1128px;top:339px;line-height:25px;font-size:17.400px">2005</div><div class="t" style="right:1006px;top:339px;line-height:25px;font-size:17.400px">9,9</div><div class="t" style="right:898px;top:339px;line-height:25px;font-size:17.400px">5,5</div>
</div>
<div class="t" style="right:1005px;top:367px;color:#000;font-size:12px;letter-spacing:0">43</div>
<div class="t" style="right:897px;top:367px;color:#000;font-size:12px;letter-spacing:0">28,3</div>
<!-- blue range -->
<div class="a" style="left:155px;top:363px;width:231px;height:22px;border:2px solid #1c1cd8;border-top-width:2px"></div>
<div class="a" style="left:217px;top:364px;width:2px;height:20px;background:#1c1cd8"></div>
<div class="a" style="left:153px;top:361px;width:5px;height:5px;background:#1c1cd8"></div>
<div class="a" style="left:382px;top:361px;width:5px;height:5px;background:#1c1cd8"></div>
<div class="a" style="left:153px;top:380px;width:5px;height:5px;background:#1c1cd8"></div>
<div class="a" style="left:382px;top:380px;width:5px;height:5px;background:#1c1cd8"></div>
<!-- BAR CHART -->
<div class="a" style="left:701px;top:287px;width:481px;height:289px;background:#fff;border:1px solid #868686"></div>
<div class="a" style="left:751px;top:301px;width:263px;height:1px;background:#868686"></div>
<div class="a" style="left:755px;top:301px;width:1px;height:231px;background:#868686"></div>
<div class="a" style="left:751px;top:347px;width:263px;height:1px;background:#868686"></div>
<div class="a" style="left:751px;top:393px;width:263px;height:1px;background:#868686"></div>
<div class="a" style="left:751px;top:439px;width:263px;height:1px;background:#868686"></div>
<div class="a" style="left:751px;top:485px;width:263px;height:1px;background:#868686"></div>
<div class="a" style="left:751px;top:531px;width:263px;height:1px;background:#868686"></div>
<div class="a" style="left:949px;top:531px;width:1px;height:5px;background:#868686"></div>
<div class="a" style="left:1013px;top:531px;width:1px;height:5px;background:#868686"></div>
<div class="a" style="left:893px;top:347px;width:16px;height:184px;background:#4f81bd"></div>
<div class="a" style="left:959px;top:347px;width:15px;height:184px;background:#4f81bd"></div>
<div class="t" style="left:715px;top:295px;color:#000;font-size:12px;letter-spacing:0">2500</div>
<div class="t" style="left:913px;top:546px;color:#000;font-size:12px;letter-spacing:0">3</div>
<div class="t" style="left:977px;top:546px;color:#000;font-size:12px;letter-spacing:0">4</div>
<div class="a" style="left:1035px;top:403px;width:7px;height:7px;background:#4f81bd"></div><div class="t" style="left:1045px;top:400px;color:#000;font-size:12px;letter-spacing:0">Год</div>
<div class="a" style="left:1035px;top:427px;width:7px;height:7px;background:#c0504d"></div><div class="t" style="left:1045px;top:424px;color:#000;font-size:12px;letter-spacing:0">в городах</div>
<div class="a" style="left:1035px;top:451px;width:7px;height:7px;background:#9bbb59"></div><div class="t" style="left:1045px;top:448px;color:#000;font-size:12px;letter-spacing:0">в сельской местности</div>
<!-- PIE CHART -->
<div class="a" style="left:411px;top:318px;width:493px;height:302px;border-radius:9px;background:rgba(192,235,244,.45);border:1px solid rgba(140,170,180,.5)"></div>
<div class="a" style="left:417px;top:325px;width:481px;height:289px;border-radius:7px;background:#fff;border:1px solid #868686"></div>
<svg class="a" style="left:0;top:0" width="1280" height="800" viewBox="0 0 1280 800">
<path d="M662.4 478.0 L662.4 374.5 A103.5 103.5 0 1 1 600.0 560.5 Z" fill="#4f81bd"/>
<path d="M613.0 460.8 L550.9 543.0 A103.0 103.0 0 0 1 613.0 357.8 Z" fill="#c0504d"/>
</svg>
<div class="a" style="left:866px;top:453px;width:7px;height:7px;background:#4f81bd"></div><div class="t" style="left:877px;top:450px;color:#000;font-size:11px;letter-spacing:0">1</div>
<div class="a" style="left:866px;top:477px;width:7px;height:7px;background:#c0504d"></div><div class="t" style="left:877px;top:474px;color:#000;font-size:11px;letter-spacing:0">2</div>
<!-- selection handles -->
<div class="hd" style="left:414px;top:322px;box-shadow:4px 0 0 #5a5a5a,0 4px 0 #5a5a5a"></div>
<div class="hd" style="left:899px;top:322px;box-shadow:-4px 0 0 #5a5a5a,0 4px 0 #5a5a5a"></div>
<div class="hd" style="left:414px;top:615px;box-shadow:4px 0 0 #5a5a5a,0 -4px 0 #5a5a5a"></div>
<div class="hd" style="left:899px;top:615px;box-shadow:-4px 0 0 #5a5a5a,0 -4px 0 #5a5a5a"></div>
<div class="hd" style="left:651px;top:321px;width:1.5px;height:1.5px;box-shadow:3px 0 0 #5a5a5a,6px 0 0 #5a5a5a,9px 0 0 #5a5a5a"></div>
<div class="hd" style="left:651px;top:615px;width:1.5px;height:1.5px;box-shadow:3px 0 0 #5a5a5a,6px 0 0 #5a5a5a,9px 0 0 #5a5a5a"></div>
<div class="hd" style="left:414px;top:463px;width:1.5px;height:1.5px;box-shadow:0 3px 0 #5a5a5a,0 6px 0 #5a5a5a,0 9px 0 #5a5a5a"></div>
<div class="hd" style="left:900px;top:463px;width:1.5px;height:1.5px;box-shadow:0 3px 0 #5a5a5a,0 6px 0 #5a5a5a,0 9px 0 #5a5a5a"></div>
<!-- VERTICAL SCROLLBAR -->
<div class="a" style="left:1265px;top:169px;width:15px;height:564px;background:linear-gradient(90deg,#6d8cc2 0,#86a3d4 3px,#9ab4de 9px,#8facd9 15px)"></div>
<div class="a" style="left:1266px;top:170px;width:13px;height:5px;border:1px solid #e8eef8;background:#fff;box-shadow:0 0 0 1px #7d95bd"></div>
<div class="a" style="left:1268px;top:181px;width:0;height:0;border-left:4.500px solid transparent;border-right:4.500px solid transparent;border-bottom:5px solid #46557c"></div>
<div class="a" style="left:1266px;top:192px;width:13px;height:477px;border:1px solid #7d95bd;border-radius:2px;background:linear-gradient(90deg,#f1f5fb 0,#dfe8f4 40%,#c4d3ea 100%)"></div>
<div class="a" style="left:1269px;top:426px;width:8px;height:1px;background:#6f84a8;box-shadow:0 2px 0 #6f84a8,0 4px 0 #6f84a8,0 6px 0 #6f84a8"></div>
<div class="a" style="left:1269px;top:722px;width:0;height:0;border-left:4px solid transparent;border-right:4px solid transparent;border-top:5px solid #4c5f80"></div>
<!-- SHEET TAB BAR -->
<div class="a" style="left:0;top:732px;width:1280px;height:17px;background:linear-gradient(#aec3e4 0,#96b1da 9px,#84a3d3 15px,#5f7fb5 16px,#5f7fb5 17px);border-top:1px solid #8ea6cc"></div>
<div class="a" style="left:0;top:733px;width:63px;height:16px;background:linear-gradient(#e3ecf8,#cbdbf0);border-right:1px solid #8ea6cc"></div>
<svg class="a" style="left:0;top:733px" width="64" height="16" viewBox="0 0 64 16"><g fill="#1e3f86"><rect x="5" y="4" width="1.500" height="8"/><path d="M12 4 V12 L7 8Z"/><path d="M27 4 V12 L22 8Z"/><path d="M36 4 V12 L41 8Z"/><path d="M50 4 V12 L55 8Z"/><rect x="55.500" y="4" width="1.500" height="8"/></g></svg>
<svg class="a" style="left:62px;top:732px" width="200" height="18" viewBox="0 0 200 18">
<defs><linearGradient id="tb" x1="0" y1="0" x2="0" y2="1"><stop offset="0" stop-color="#dbe6f5"/><stop offset="1" stop-color="#bcd0ec"/></linearGradient></defs>
<path d="M169 1.500 H203 L189 15.500 H160 Z" fill="url(#tb)" stroke="#7f98c2"/>
<path d="M112 1.500 H171 L158 15.500 H103 Z" fill="url(#tb)" stroke="#7f98c2"/>
<path d="M59 1.500 H118 L105 15.500 H50 Z" fill="url(#tb)" stroke="#7f98c2"/>
<path d="M1.500 0 V15.500 H51 L64 0 Z" fill="#fff" stroke="#7f98c2"/>
<rect x="174.500" y="5.500" width="10" height="7" rx="1" fill="#f4f6fb" stroke="#5f6b80" stroke-width="1"/><path d="M174 1 l1 2.500 2.500 1 -2.500 1 -1 2.500 -1 -2.500 -2.500 -1 2.500 -1z" fill="#f6b818" stroke="#c88a10" stroke-width=".5"/>
</svg>
<div class="t" style="left:72px;top:734px;font-weight:bold;font-size:12.500px;color:#1e3a6e;letter-spacing:-.3px">Лист1</div>
<div class="t" style="left:126px;top:734px;font-size:12.500px;letter-spacing:0;color:#1e3f86">Лист2</div>
<div class="t" style="left:179px;top:734px;font-size:12.500px;letter-spacing:0;color:#1e3f86">Лист3</div>
<!-- horizontal scrollbar -->
<div class="a" style="left:759px;top:733px;width:5px;height:16px;background:#fff;border:1px solid #4c5f80"></div>
<div class="a" style="left:765px;top:733px;width:500px;height:16px;background:linear-gradient(#9db5da 0,#c5d6ee 3px,#d5e2f4 10px,#c0d2ec 16px)"></div>
<div class="a" style="left:769px;top:737px;width:0;height:0;border-top:4px solid transparent;border-bottom:4px solid transparent;border-right:5px solid #4c5f80"></div>
<div class="a" style="left:781px;top:734px;width:408px;height:14px;border:1px solid #7d95bd;border-radius:2px;background:linear-gradient(#f3f6fb 0,#e1e9f4 45%,#c2d1e8 100%)"></div>
<div class="a" style="left:981px;top:738px;width:1px;height:7px;background:#6f84a8;box-shadow:2px 0 0 #6f84a8,4px 0 0 #6f84a8,6px 0 0 #6f84a8"></div>
<!-- STATUS BAR -->
<div class="a" style="left:0;top:749px;width:1280px;height:23px;background:linear-gradient(#f3f8ff 0,#f3f8ff 1px,#d9e7fb 1px,#cfe0f8 7px,#c2d6f4 8px,#bcd2f2 15px,#c9dcf7 16px,#d6e6fb 22px)"></div>
<div class="a" style="left:60px;top:751px;width:1px;height:19px;background:#9cb7e0;box-shadow:1px 0 0 #eef4fc"></div>
<div class="a" style="left:1035px;top:750px;width:245px;height:21px;background:linear-gradient(#cfdff6 0,#b6cdef 8px,#a3bee8 9px,#98b5e3 16px,#a4bfe9 19px,#c2d6f4 21px)"></div>
<div class="a" style="left:1034px;top:751px;width:1px;height:19px;background:#8aa8d8;box-shadow:1px 0 0 #dfeaf9"></div>
<div class="t" style="left:7px;top:752px;font-size:11px;letter-spacing:0">Готово</div>
<div class="t" style="left:781px;top:752px;font-size:11px;letter-spacing:0">Среднее: 35,65</div>
<div class="t" style="left:874px;top:752px;font-size:11px;letter-spacing:0">Количество: 2</div>
<div class="t" style="left:965px;top:752px;font-size:11px;letter-spacing:0">Сумма: 71,3</div>
<div class="t" style="left:1104px;top:752px;font-size:11px;letter-spacing:0">100%</div>
<!-- view buttons -->
<div class="a" style="left:1040px;top:750px;width:57px;height:19px;border:1px solid #a3bde0;border-radius:2px;background:linear-gradient(#e4edf9,#c9dbf2)"></div>
<div class="a" style="left:1041px;top:751px;width:18px;height:17px;background:linear-gradient(#fbdba0,#fdc25c 50%,#fbb040);border:1px solid #c89a50"></div>
<svg class="a" style="left:1040px;top:750px" width="58" height="19" viewBox="0 0 58 19"><rect x="4.500" y="4.500" width="11" height="9" fill="#fff" stroke="#555"/><path d="M4.500 7.500 h11 M4.500 10.500 h11 M8.500 4.500 v9 M12 4.500 v9" stroke="#555" fill="none"/>
<rect x="22.500" y="3.500" width="12" height="11" fill="#e8edf5" stroke="#555"/><rect x="25.500" y="5.500" width="6" height="7" fill="#fff" stroke="#777"/>
<rect x="41.500" y="3.500" width="12" height="11" fill="#fff" stroke="#555"/><path d="M45.500 3.500 v7 M49.500 3.500 v7 M41.500 10.500 h12" stroke="#555" fill="none"/></svg>
<!-- zoom slider -->
<div class="a" style="left:1155px;top:759px;width:106px;height:1px;background:#6f88b4;box-shadow:0 1px 0 #eef4fc"></div>
<div class="a" style="left:1141px;top:752px;width:15px;height:15px;border-radius:50%;border:1px solid #7590bd;background:radial-gradient(circle at 50% 30%,#fff,#d5e2f4)"></div>
<div class="a" style="left:1145px;top:758px;width:7px;height:2px;background:#4c5f80"></div>
<div class="a" style="left:1260px;top:752px;width:15px;height:15px;border-radius:50%;border:1px solid #7590bd;background:radial-gradient(circle at 50% 30%,#fff,#d5e2f4)"></div>
<div class="a" style="left:1264px;top:758px;width:7px;height:2px;background:#4c5f80"></div><div class="a" style="left:1266.500px;top:755.500px;width:2px;height:7px;background:#4c5f80"></div>
<svg class="a" style="left:1202px;top:752px" width="11" height="14" viewBox="0 0 11 14"><path d="M1.500 1.500 H9.500 V8 L5.500 12.500 L1.500 8 Z" fill="#e9f0fa" stroke="#6f84a8"/></svg>
<!-- TASKBAR -->
<div class="a" style="left:0;top:771px;width:1280px;height:29px;background:linear-gradient(#1a3c9f 0,#1a3c9f 1px,#64a2ee 1px,#72acf1 3px,#4f8fec 6px,#3a7ae4 10px,#2d68dc 16px,#275fd4 22px,#2152c0 26px,#1a3f9f 29px)"></div>
<div class="a" style="left:1095px;top:771px;width:185px;height:29px;background:linear-gradient(#0f5cc0 0,#1ea2f2 2px,#22a8f6 4px,#139bee 8px,#0f8fe6 14px,#1193ea 22px,#0d7fd6 27px,#0a5cb0 29px);border-left:1px solid #0c3f9c;box-shadow:inset 1px 0 0 #3bb6f8"></div>
<div class="a" style="left:0;top:771px;width:98px;height:29px;border-radius:0 14px 14px 0/0 16px 16px 0;background:linear-gradient(#2f7f2f 0,#6dc06d 2px,#4daa4d 5px,#3b993b 10px,#359335 18px,#2f8a2f 24px,#226f22 29px);box-shadow:1px 0 2px rgba(0,0,40,.5)"></div>
<svg class="a" style="left:9px;top:775px" width="22" height="20" viewBox="0 0 22 20">
<path d="M3.500 2.500 C6 0.500 8.500 1.500 10.500 2.800 L9 8.800 C7 7.500 4.500 6.800 2 8.500 Z" fill="#e8552a"/>
<path d="M11.800 3.200 C14 4.300 16.500 4.500 19 2.800 L17.500 8.800 C15 10.500 12.500 10 10.300 9Z" fill="#7cc344"/>
<path d="M1.700 10 C4.200 8.200 6.700 9 8.700 10.200 L7.200 16.200 C5.200 15 2.700 14.200 .2 16 Z" fill="#3d84e8"/>
<path d="M10 10.600 C12.200 11.700 14.700 12 17.200 10.300 L15.700 16.300 C13.200 18 10.700 17.500 8.500 16.500Z" fill="#f7c934"/>
</svg>
<div class="t" style="left:34px;top:775px;font-size:18px;line-height:20px;font-weight:bold;font-style:italic;color:#fff;text-shadow:1px 1px 1px #1d4a1d;letter-spacing:-1px">пуск</div>
<div class="tb" style="left:107px"></div><div class="tb" style="left:267px"></div><div class="tb" style="left:427px"></div><div class="tb" style="left:587px"></div>
<div class="tb" style="left:747px;background:linear-gradient(#173f9c 0,#1c4aae 3px,#1f52ba 12px,#2258c2 21px,#1c47a8 23px);box-shadow:inset 1px 1px 1px rgba(0,0,40,.6)"></div>
<div class="tbt" style="left:134px">F:\УМКД\ИОПД_Фар…</div>
<div class="tbt" style="left:294px">преподавателя_3.d…</div>
<div class="tbt" style="left:454px">практика3.doc [Реж…</div>
<div class="tbt" style="left:614px">Документ1 - Microso…</div>
<div class="tbt" style="left:775px">Microsoft Excel - Кни…</div>
<!-- task icons -->
<svg class="a" style="left:115px;top:777px" width="15" height="17" viewBox="0 0 15 17"><path d="M1 2 H6 L7 1 H9 V16 H1 Z" fill="#f5d56a" stroke="#b8922a" stroke-width=".8"/><path d="M7 3 L13 1.500 V14.500 L7 16 Z" fill="#f0c040" stroke="#b8922a" stroke-width=".8"/><rect x="11" y="9" width="1.200" height="3" fill="#4aa0e0"/></svg>
<svg class="a" style="left:276px;top:777px" width="16" height="17" viewBox="0 0 16 17"><path d="M3.500 1.500 H11 L14.500 5 V15.500 H3.500 Z" fill="#fff" stroke="#5a6a8a"/><rect x="1" y="4" width="9" height="9" fill="#2b57b8"/><text x="2" y="11.500" font-family="Liberation Sans,sans-serif" font-weight="bold" font-size="8" fill="#fff">W</text></svg>
<svg class="a" style="left:436px;top:777px" width="16" height="17" viewBox="0 0 16 17"><path d="M3.500 1.500 H11 L14.500 5 V15.500 H3.500 Z" fill="#fff" stroke="#5a6a8a"/><rect x="1" y="4" width="9" height="9" fill="#2b57b8"/><text x="2" y="11.500" font-family="Liberation Sans,sans-serif" font-weight="bold" font-size="8" fill="#fff">W</text></svg>
<svg class="a" style="left:596px;top:777px" width="16" height="17" viewBox="0 0 16 17"><path d="M3.500 1.500 H11 L14.500 5 V15.500 H3.500 Z" fill="#fff" stroke="#5a6a8a"/><rect x="1" y="4" width="9" height="9" fill="#2b57b8"/><text x="2" y="11.500" font-family="Liberation Sans,sans-serif" font-weight="bold" font-size="8" fill="#fff">W</text></svg>
<svg class="a" style="left:756px;top:777px" width="17" height="17" viewBox="0 0 17 17"><path d="M4.500 1.500 H12 L15.500 5 V15.500 H4.500 Z" fill="#fff" stroke="#5a8a5a"/><rect x="1" y="4" width="10" height="10" fill="#2e8a3a"/><text x="3" y="12" font-family="Liberation Sans,sans-serif" font-weight="bold" font-size="9" fill="#fff">X</text></svg>
<!-- TRAY -->
<div class="a" style="left:1096px;top:771px;width:184px;height:29px;background:linear-gradient(#e4ecf8 0,#a9c5ef 1px,#8fb3ea 4px,#6f9be0 10px,#5686d4 17px,#4576c8 23px,#3a66b4 29px)"></div>
<div class="a" style="left:1087px;top:777px;width:17px;height:17px;border-radius:50%;background:radial-gradient(circle at 50% 40%,#ffffff 0,#dfeafb 45%,#9fbdea 100%);border:1px solid #7fa0dc;box-shadow:0 0 2px #dfeaff"></div>
<svg class="a" style="left:1091px;top:781px" width="9" height="10" viewBox="0 0 9 10"><path d="M6.500 1.500 L2.500 5 L6.500 8.500" fill="none" stroke="#2a5fc0" stroke-width="1.800"/></svg>
<svg class="a" style="left:1106px;top:777px" width="18" height="17" viewBox="0 0 18 17"><g fill="#f2f2f2" stroke="#8a8a8a" stroke-width=".7"><rect x="1.500" y="11.500" width="2.500" height="3.500"/><rect x="5" y="9" width="2.500" height="6"/><rect x="8.500" y="6" width="2.500" height="9"/><rect x="12" y="2.500" width="2.500" height="12.500"/></g><path d="M9.500 9.500 L15.500 15.500 M15.500 9.500 L9.500 15.500" stroke="#e02020" stroke-width="2"/></svg>
<svg class="a" style="left:1124px;top:777px" width="17" height="17" viewBox="0 0 17 17"><rect x="1" y="1" width="14" height="14" fill="#fff"/><path d="M2 1.500 H5.500 V7 L10.500 1.500 H14.500 L8 8 L5.500 14 H2 Z" fill="#e01818"/><path d="M8.500 8.500 L13 13 M13 13 V9.500 M13 13 H9.500" stroke="#000" stroke-width="2" fill="none"/><path d="M10 14.500 H14.500 V10 Z" fill="#000"/></svg>
<svg class="a" style="left:1142px;top:776px" width="18" height="18" viewBox="0 0 18 18"><defs><radialGradient id="tg" cx=".4" cy=".3" r=".8"><stop offset="0" stop-color="#7fd0ff"/><stop offset="1" stop-color="#1f78d8"/></radialGradient></defs><circle cx="9" cy="9.500" r="7.800" fill="url(#tg)" stroke="#5a9ae0" stroke-width=".6"/><path d="M3.500 6 L9 11 L14.500 6 L10.500 16 H7.500 Z" fill="#38d030"/><path d="M7.500 10.500 H10.500 L9 13.500Z" fill="#e02020"/><circle cx="9" cy="4.200" r="2.300" fill="#fff"/></svg>
<svg class="a" style="left:1161px;top:777px" width="16" height="16" viewBox="0 0 16 16"><rect x=".5" y=".5" width="15" height="15" rx="2" fill="#111"/><rect x="1.500" y="11" width="13" height="3.500" fill="#20b030"/><path d="M3.500 3 L12.500 11.500 M12.500 3 L3.500 11.500" stroke="#e01818" stroke-width="3"/></svg>
<svg class="a" style="left:1179px;top:779px" width="15" height="12" viewBox="0 0 15 12"><rect x="0" y="1" width="14.500" height="10" fill="#fff"/><path d="M0 2 h14.500 M0 4.200 h14.500 M0 6.400 h14.500 M0 8.600 h14.500 M0 10.500 h14.500" stroke="#d83030" stroke-width="1.100"/><rect x="0" y="1" width="6.500" height="5" fill="#3a4fa0"/></svg>
<svg class="a" style="left:1197px;top:776px" width="17" height="18" viewBox="0 0 17 18"><path d="M3 1.500 H15.500 V14.500 H3 L1.500 16 V3Z" fill="#1f5fc0" stroke="#0f3f90"/><path d="M1.500 16 H14 L15.500 14.500" fill="none" stroke="#dfe8f8"/><g fill="#9fd0ff"><circle cx="9" cy="6" r=".8"/><circle cx="9" cy="8.500" r=".8"/><circle cx="9" cy="11" r=".8"/><circle cx="6.500" cy="7.200" r=".8"/><circle cx="11.500" cy="7.200" r=".8"/><circle cx="6.500" cy="9.800" r=".8"/><circle cx="11.500" cy="9.800" r=".8"/></g></svg>
<div class="t" style="left:1222px;top:775px;font-family:'DejaVu Sans','Liberation Sans',sans-serif;font-weight:bold;font-size:17px;line-height:20px;color:#0c0c86;letter-spacing:-.2px;-webkit-text-stroke:.5px #0c0c86">17</div>
<div class="t" style="left:1249px;top:775px;font-family:'DejaVu Sans','Liberation Sans',sans-serif;font-weight:bold;font-size:11.500px;line-height:14px;color:#0c0c86;letter-spacing:0;-webkit-text-stroke:.4px #0c0c86">13</div>
<div class="t" style="left:1251px;top:786px;font-family:'DejaVu Sans','Liberation Sans',sans-serif;font-weight:bold;font-style:italic;font-size:9px;line-height:11px;color:#0c0c86">Вс</div>
<!-- tooltip -->
<div class="a" style="left:743px;top:164px;width:90px;height:17px;background:linear-gradient(#fff,#e6e8f2);border:1px solid #767676;border-radius:3px;box-shadow:2px 2px 2px rgba(0,0,0,.3)"></div>
<div class="t" style="left:748px;top:165px;font-size:11.500px;letter-spacing:-.15px;color:#4c4c5c">Строка формул</div>
<!-- overlay gadget -->
<div class="a" style="left:1131px;top:716px;width:139px;height:42px;background:rgba(200,228,248,.6);border:1px solid rgba(170,176,188,.75);border-right-width:2px;border-bottom-width:2px;box-shadow:1px 1px 2px rgba(80,90,110,.3)"></div>
<div class="a" style="left:1131px;top:734px;width:58px;height:13px;background:rgba(235,244,252,.55)"></div>
<div class="t" style="left:1219px;top:718px;font-size:9.500px;color:#3f93d6">5 KB/s</div>
<svg class="a" style="left:1251px;top:719px" width="13" height="14" viewBox="0 0 13 14"><rect x=".5" y=".5" width="12" height="13" fill="rgba(210,220,235,.7)"/><path d="M4 2 H9 V6.500 H12 L6.500 12 L1 6.500 H4 Z" fill="#f0dc50" stroke="#b89a20" stroke-width=".8"/></svg>
<svg class="a" style="left:1227px;top:731px" width="18" height="18" viewBox="0 0 18 18" opacity=".55"><circle cx="9" cy="9" r="7.800" fill="#5ab0e8"/><path d="M3.500 5.500 L9 10.500 L14.500 5.500 L10.500 15.500 H7.500 Z" fill="#48d040"/><circle cx="9" cy="4" r="2.200" fill="#fff"/></svg>
<div class="a" style="left:1250px;top:738px;width:14px;height:14px;background:rgba(200,212,232,.7)"></div>
<div class="a" style="left:1245px;top:736px;width:0;height:0;border-top:4px solid transparent;border-bottom:4px solid transparent;border-left:5px solid rgba(140,160,190,.8)"></div>
<div class="a" style="left:1254px;top:741px;width:0;height:0;border-top:4px solid transparent;border-bottom:4px solid transparent;border-left:5px solid rgba(140,160,190,.8)"></div>
<div class="a" style="left:1257px;top:735px;width:5px;height:10px;border:1px solid #8a9ab8;background:#fff;opacity:.7"></div>
</body></html>
